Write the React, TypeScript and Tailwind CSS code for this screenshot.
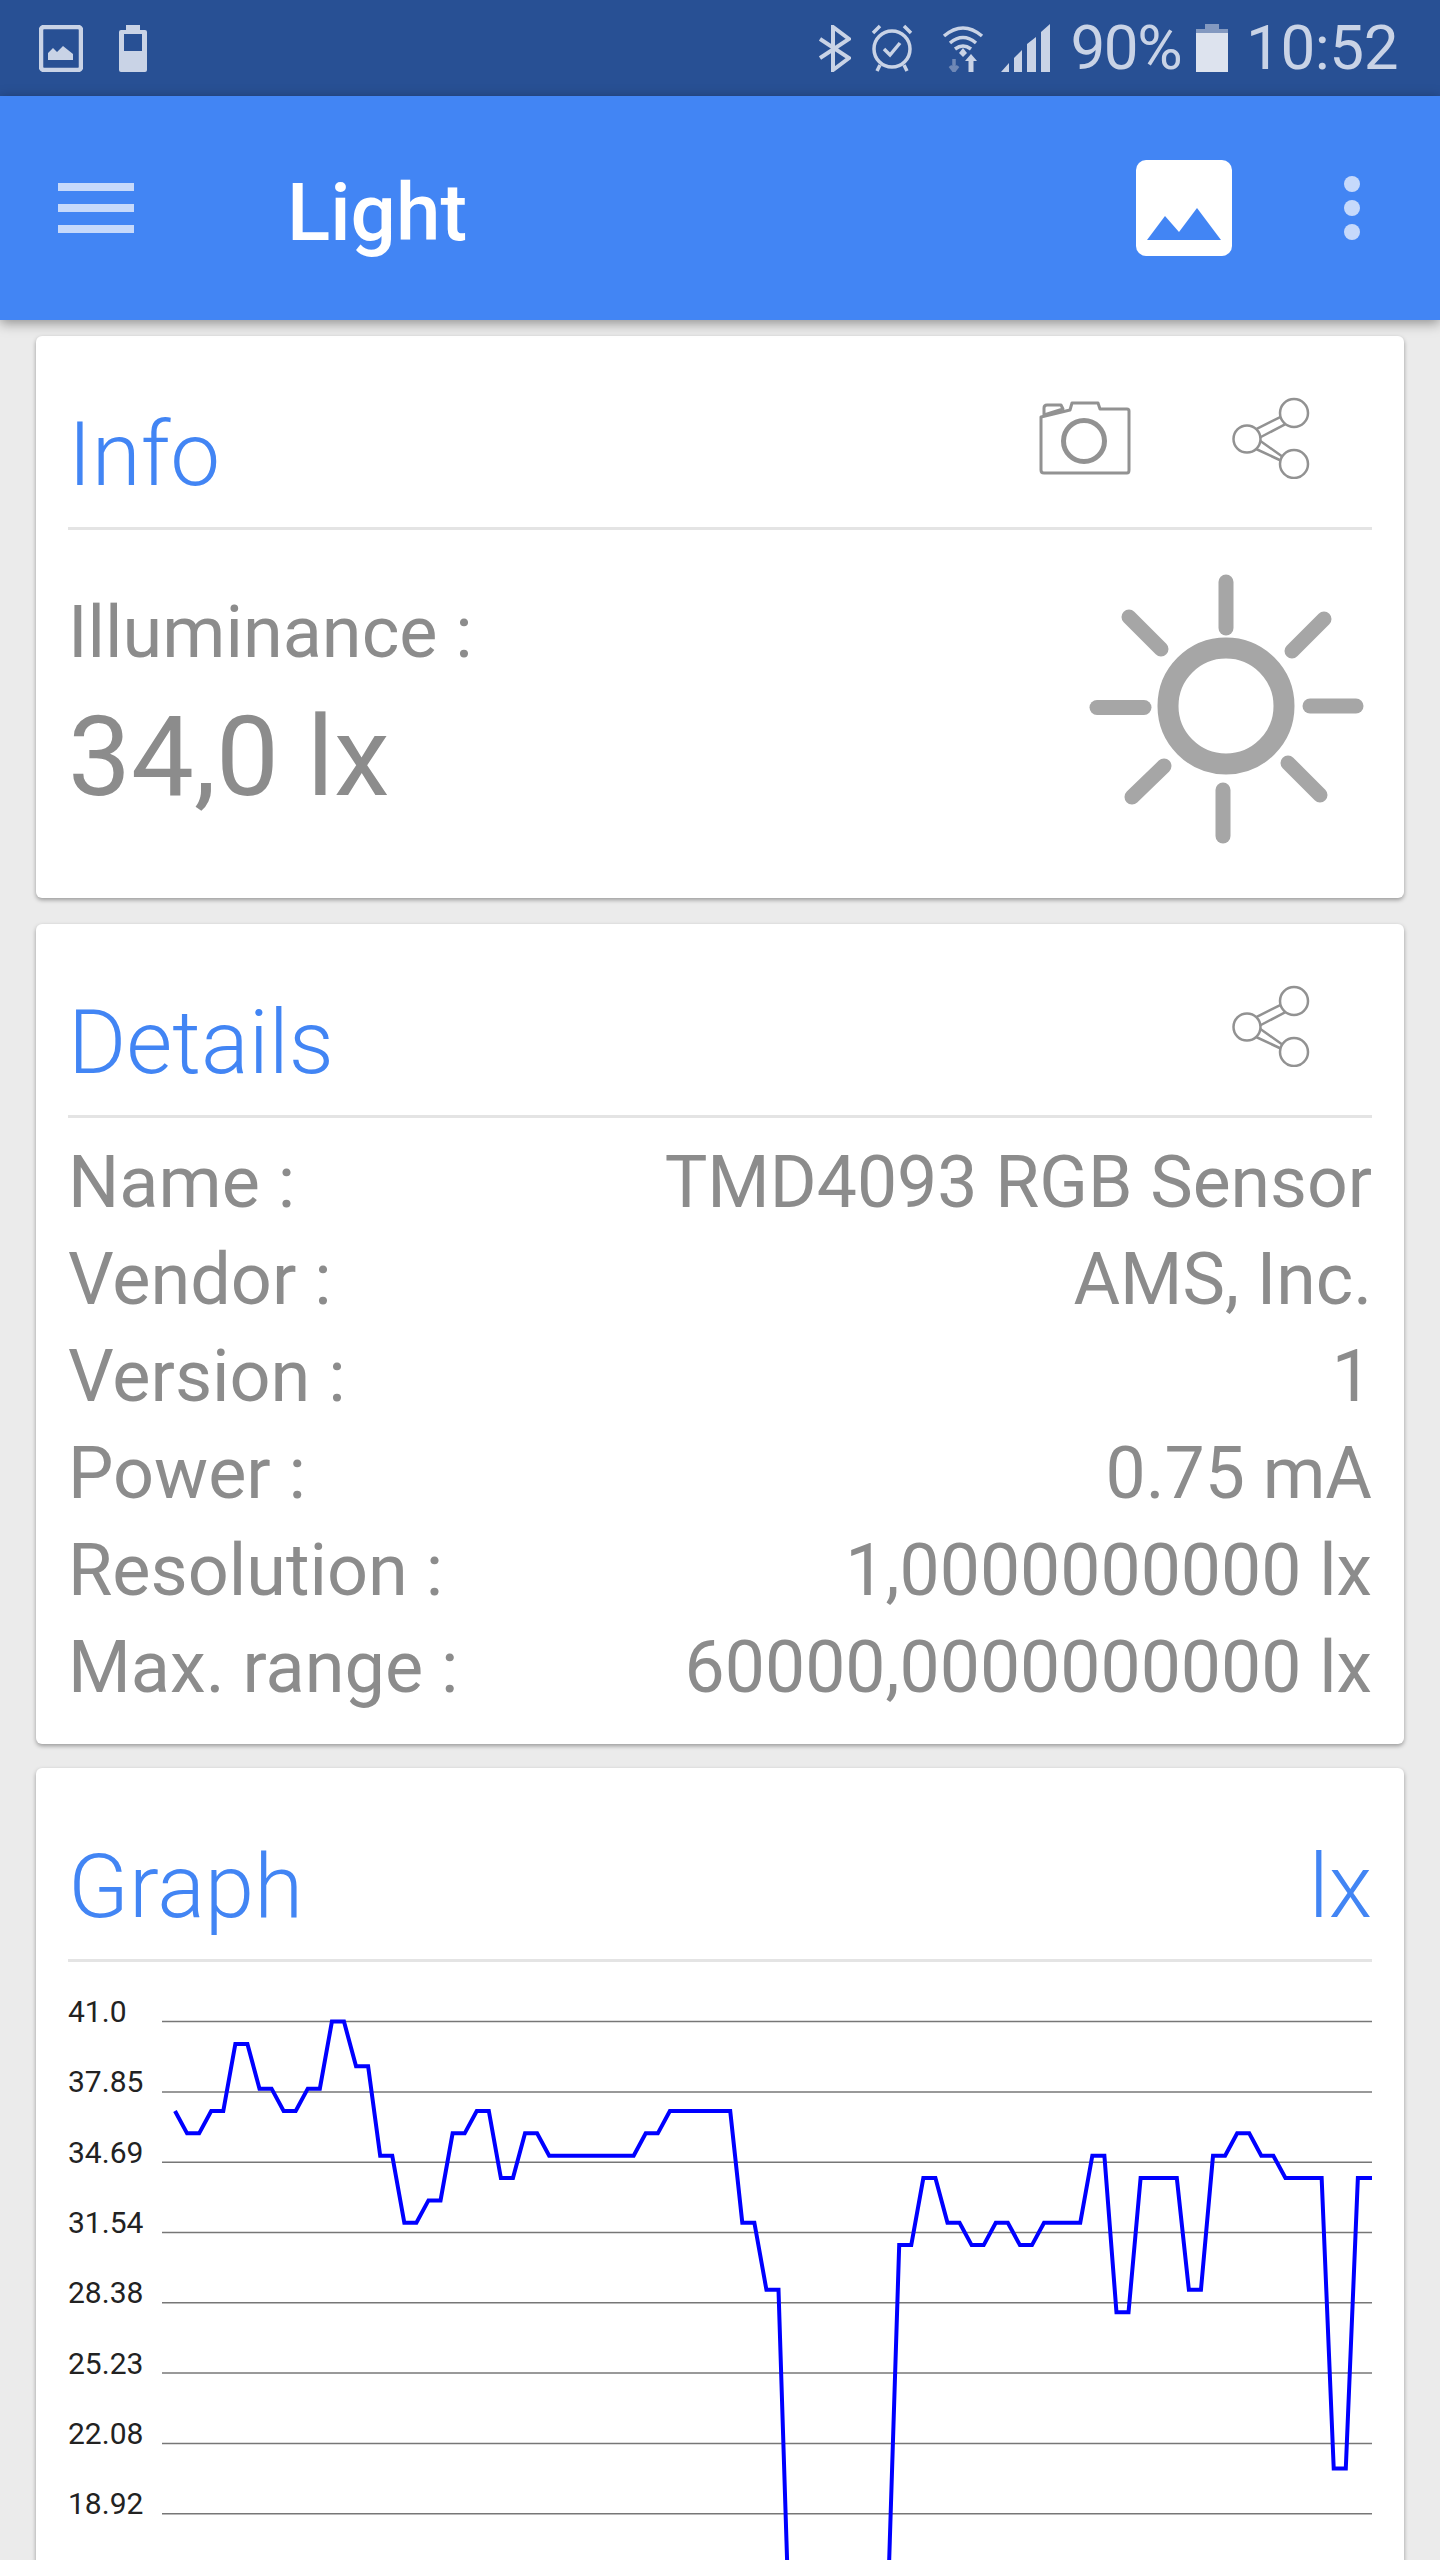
import React from 'react';

const values = [
  37, 36, 36, 37, 37, 40, 40, 38, 38, 37, 37, 38, 38, 41, 41, 39, 39, 35, 35, 32,
  32, 33, 33, 36, 36, 37, 37, 34, 34, 36, 36, 35, 35, 35, 35, 35, 35, 35, 35, 36,
  36, 37, 37, 37, 37, 37, 37, 32, 32, 29, 29, 12, 12, 12, 12, 12, 12, 12, 12, 14,
  31, 31, 34, 34, 32, 32, 31, 31, 32, 32, 31, 31, 32, 32, 32, 32, 35, 35, 28, 28,
  34, 34, 34, 34, 29, 29, 35, 35, 36, 36, 35, 35, 34, 34, 34, 34, 21, 21, 34, 34, 34,
];

const labels = ['41.0', '37.85', '34.69', '31.54', '28.38', '25.23', '22.08', '18.92'];

function ShareIcon() {
  return (
    <svg viewBox="1232 397 78 82" className="w-[78px] h-[82px]" fill="none" stroke="#929292" strokeWidth="2.5">
      <path d="M1256.7 428.8 L1281.7 416.4 M1259 438 L1285 424.4 M1259 440 L1284 457.8 M1255 448.5 L1280.7 460.5" />
      <circle cx="1294" cy="413" r="14" fill="#fff" />
      <circle cx="1247" cy="439" r="13.5" fill="#fff" />
      <circle cx="1294" cy="464" r="14" fill="#fff" />
    </svg>
  );
}

function CameraIcon() {
  return (
    <svg viewBox="0 0 92 74" className="w-[92px] h-[74px]" fill="none" stroke="#929292" strokeWidth="3" strokeLinejoin="round">
      <path d="M2 16 L2 69 Q2 72 5 72 L88 72 Q90 72 90 69 L90 10 Q90 8 88 8 L61 8 L59 2 L33 2 L31 9 L2 16 Z" />
      <path d="M5 14 L5 7 Q5 4 8 4 L22 4 L24 8 L5 14 Z" />
      <circle cx="45" cy="40" r="20.5" strokeWidth="5" />
    </svg>
  );
}

function SunIcon() {
  return (
    <svg viewBox="1085 570 284 280" className="w-[284px] h-[280px]" fill="none" stroke="#a6a6a6">
      <circle cx="1226" cy="706" r="58" strokeWidth="21" />
      <g strokeWidth="15" strokeLinecap="round">
        <path d="M1226 582 L1226 628" />
        <path d="M1223 790 L1223 836" />
        <path d="M1097 707.5 L1144 707.5" />
        <path d="M1310 706 L1356 706" />
        <path d="M1129 617 L1161 649" />
        <path d="M1324 619 L1292 651" />
        <path d="M1164 766 L1132 797" />
        <path d="M1288 763 L1320 795" />
      </g>
    </svg>
  );
}

function Row({ name, value }: { name: string; value: string }) {
  return (
    <div className="flex justify-between h-[97px] items-center">
      <span>{name}</span>
      <span className="text-[71.5px]">{value}</span>
    </div>
  );
}

function Chart() {
  const points = values.map((v, i) => `${175 + i * 12.07},${2021.6 + (41 - v) * 22.35}`).join(' ');
  return (
    <svg viewBox="68 1962 1304 598" className="block w-[1304px] h-[598px]">
      {labels.map((label, i) => (
        <g key={label}>
          <line x1="162" x2="1372" y1={2021.6 + i * 70.3} y2={2021.6 + i * 70.3} stroke="#777" strokeWidth="1.5" />
          <text x="68" y={2022 + i * 70.3} fontSize="30" fill="#222">
            {label}
          </text>
        </g>
      ))}
      <polyline points={points} fill="none" stroke="#0000ff" strokeWidth="4" strokeLinejoin="miter" />
    </svg>
  );
}

export default function App() {
  return (
    <div className="w-[1440px] h-[2560px] overflow-hidden bg-[#ebebeb] font-['Roboto',sans-serif] text-[#8c8c8c]">
      {/* Status bar */}
      <div className="h-[96px] bg-[#285094] flex items-center pl-[39px] pr-[42px] text-[#c9d3e6] text-[62px]">
        <svg viewBox="0 0 44 47" className="w-[44px] h-[47px]">
          <rect x="2" y="2" width="40" height="43" rx="3" fill="none" stroke="#c9d3e6" strokeWidth="4.5" />
          <path d="M9 34 L9 27 L14 22 L18 26 L24 20 L34 28 L34 34 Z" fill="#c9d3e6" transform="translate(0 1)" />
        </svg>
        <svg viewBox="0 0 28 47" className="w-[28px] h-[47px] ml-[36px]">
          <path fillRule="evenodd" d="M7 0 H21 V5 H26 Q28 5 28 7 V45 Q28 47 26 47 H2 Q0 47 0 45 V7 Q0 5 2 5 H7 Z M5 9 V26 H23 V9 Z" fill="#c9d3e6" />
        </svg>
        <div className="flex-1" />
        <svg viewBox="0 0 32 47" className="w-[32px] h-[47px]" fill="none" stroke="#c9d3e6" strokeWidth="4">
          <path d="M1 14 L30 33 L14 45 L14 2 L30 14 L1 33" />
        </svg>
        <svg viewBox="0 0 42 48" className="w-[42px] h-[48px] ml-[20px]" fill="none" stroke="#c9d3e6" strokeWidth="3.5">
          <ellipse cx="21" cy="25" rx="18" ry="18" />
          <path d="M13 25 L19 31 L29 19" />
          <path d="M2 9 L9 2 M33 2 L40 9 M9 41 L6 47 M33 41 L36 47" />
        </svg>
        <svg viewBox="0 0 42 48" className="w-[42px] h-[48px] ml-[29px]" fill="none" stroke="#c9d3e6" strokeWidth="3.5">
          <path d="M2 12 Q21 -4 40 12 M8 19 Q21 8 34 19 M13 25 Q21 19 29 25" />
          <path d="M17 29 L21 24 L25 29 L21 33 Z" fill="#c9d3e6" stroke="none" />
          <path d="M12 35 V48 M8 42 L12 47 L16 42" stroke="#6f88b6" />
          <path d="M29 48 V35" strokeWidth="5" />
          <path d="M23 37 L29 30 L35 37 Z" fill="#c9d3e6" stroke="none" />
        </svg>
        <svg viewBox="0 0 49 48" className="w-[49px] h-[48px] ml-[17px]" fill="#c9d3e6">
          <path d="M0 48 L8 39 V48 Z M13 34 L21 26 V48 H13 Z M26 20 L35 13 V48 H26 Z M40 8 L49 0 V48 H40 Z" />
        </svg>
        <span className="ml-[20px] leading-none tracking-[-1.5px]">90%</span>
        <svg viewBox="0 0 32 48" className="w-[32px] h-[48px] ml-[15px]">
          <path d="M9 0 H23 V5 H32 V9 H0 V5 H9 Z" fill="#8399c0" />
          <rect x="0" y="9" width="32" height="39" fill="#dde3ee" />
        </svg>
        <span className="ml-[18px] leading-none tracking-[-0.5px]">10:52</span>
      </div>

      {/* App bar */}
      <div className="relative h-[224px] bg-[#4285f4] flex items-center pl-[58px] pr-[80px] shadow-[0_3px_12px_rgba(0,0,0,0.4)]">
        <div className="w-[76px] flex flex-col gap-[13px]">
          <div className="h-[8px] bg-[#c6d9fb]" />
          <div className="h-[8px] bg-[#c6d9fb]" />
          <div className="h-[8px] bg-[#c6d9fb]" />
        </div>
        <span className="ml-[153px] mt-[10px] text-white text-[80px] font-medium leading-none">Light</span>
        <div className="flex-1" />
        <svg viewBox="0 0 96 96" className="w-[96px] h-[96px]">
          <rect width="96" height="96" rx="10" fill="#fff" />
          <path d="M11 80 L29 56 L43 72 L61 48 L85 80 Z" fill="#4285f4" />
        </svg>
        <div className="ml-[112px] flex flex-col gap-[8px]">
          <div className="w-[16px] h-[16px] rounded-full bg-[#c6d9fb]" />
          <div className="w-[16px] h-[16px] rounded-full bg-[#c6d9fb]" />
          <div className="w-[16px] h-[16px] rounded-full bg-[#c6d9fb]" />
        </div>
      </div>

      <div className="mx-[36px] pt-[16px] flex flex-col">
        {/* Info */}
        <div className="h-[562px] bg-white rounded-[6px] px-[32px] shadow-[0_2px_4px_rgba(0,0,0,0.35)]">
          <div className="h-[194px] border-b-[3px] border-[#e4e4e4] flex justify-between items-start">
            <span className="mt-[69px] text-[89px] leading-[100px] font-light text-[#4285f4]">Info</span>
            <div className="flex items-start mt-[61px] mr-[62px] gap-[101px]">
              <div className="mt-[4px]"><CameraIcon /></div>
              <ShareIcon />
            </div>
          </div>
          <div className="flex justify-between">
            <div>
              <div className="mt-[61px] text-[72px] leading-[84px]">Illuminance :</div>
              <div className="mt-[17px] text-[112px] leading-[130px]">34,0 lx</div>
            </div>
            <div className="mt-[40px] mr-[3px]"><SunIcon /></div>
          </div>
        </div>

        {/* Details */}
        <div className="mt-[26px] h-[820px] bg-white rounded-[6px] px-[32px] shadow-[0_2px_4px_rgba(0,0,0,0.35)]">
          <div className="h-[194px] border-b-[3px] border-[#e4e4e4] flex justify-between items-start">
            <span className="mt-[69px] text-[89px] leading-[100px] font-light text-[#4285f4]">Details</span>
            <div className="mt-[61px] mr-[62px]"><ShareIcon /></div>
          </div>
          <div className="mt-[16px] text-[72px]">
            <Row name="Name :" value="TMD4093 RGB Sensor" />
            <Row name="Vendor :" value="AMS, Inc." />
            <Row name="Version :" value="1" />
            <Row name="Power :" value="0.75 mA" />
            <Row name="Resolution :" value="1,0000000000 lx" />
            <Row name="Max. range :" value="60000,0000000000 lx" />
          </div>
        </div>

        {/* Graph */}
        <div className="mt-[24px] h-[900px] bg-white rounded-[6px] px-[32px] shadow-[0_2px_4px_rgba(0,0,0,0.35)]">
          <div className="h-[194px] border-b-[3px] border-[#e4e4e4] flex justify-between items-start">
            <span className="mt-[69px] text-[89px] leading-[100px] font-light text-[#4285f4]">Graph</span>
            <span className="mt-[69px] text-[89px] leading-[100px] font-light text-[#4285f4]">lx</span>
          </div>
          <Chart />
        </div>
      </div>
    </div>
  );
}
